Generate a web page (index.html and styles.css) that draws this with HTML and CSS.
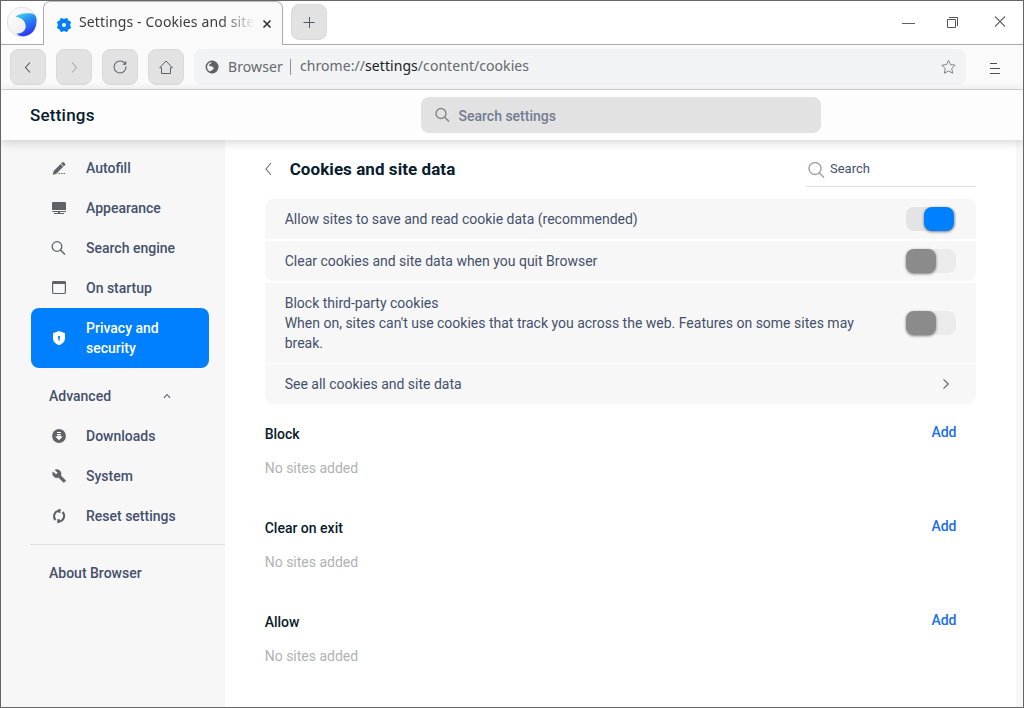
FILE: index.html
```html
<!DOCTYPE html>
<html lang="en">
<head>
<meta charset="utf-8">
<title>Settings - Cookies and site data</title>
<link rel="stylesheet" href="styles.css">
</head>
<body>
<div class="window">
  <header class="tabstrip">
    <div class="brand">
      <svg width="32" height="32" viewBox="0 0 32 32">
        <defs>
          <linearGradient id="wave" x1="0" y1="0" x2=".45" y2="1"><stop offset="0" stop-color="#4be3ee"/><stop offset=".45" stop-color="#278df5"/><stop offset="1" stop-color="#2a36f5"/></linearGradient>
          <linearGradient id="disc" x1="0" y1="0" x2="1" y2="1"><stop offset="0" stop-color="#fff"/><stop offset="1" stop-color="#e8e8ea"/></linearGradient>
        </defs>
        <circle cx="16" cy="16" r="14.8" fill="url(#disc)" stroke="#e2e2e4"/>
        <path d="M9.500 11C12 8 17 7 22 7.300C28 7.300 30.500 9 30.500 14C30.500 22 27 28.500 19 30C15 30.700 12 29.500 10.500 27.500C15 28 19.800 25 19.700 20C19.300 14.500 15 11 9.500 11Z" fill="url(#wave)"/>
      </svg>
    </div>
    <div class="tab">
      <svg class="tab-icon" width="16" height="16" viewBox="0 0 16 16"><path fill="#0080ff" fill-rule="evenodd" d="M5.500 1L8 2L10.500 1L12 2L12.300 3.700L14 4L15 5.500L14 8L15 10.500L14 12L12.300 12.300L12 14L10.500 15L8 14L5.500 15L4 14L3.700 12.300L2 12L1 10.500L2 8L1 5.500L2 4L3.700 3.700L4 2ZM8 5.900A2.100 2.100 0 1 0 8 10.100A2.100 2.100 0 0 0 8 5.900Z"/></svg>
      <span class="tab-title">Settings - Cookies and site</span>
      <svg width="10" height="10" viewBox="0 0 10 10"><path d="M1.500 1.500L8.500 8.500M8.500 1.500L1.500 8.500" stroke="#333" stroke-width="1.700"/></svg>
    </div>
    <div class="strip-rest">
      <div class="btn"><svg width="12" height="12" viewBox="0 0 12 12"><path d="M.5 6.500H11.500M6.500 1V12" stroke="#4c5876"/></svg></div>
      <div class="controls">
        <svg width="13" height="13" viewBox="0 0 13 13"><path d="M0 7.500H13" stroke="#5f5f66"/></svg>
        <svg width="12" height="12" viewBox="0 0 12 12"><path d="M.5 3.500H8.500V11.500H.5ZM2 1.500H10.500V10" fill="none" stroke="#55555c"/></svg>
        <svg width="12" height="12" viewBox="0 0 12 12"><path d="M1 .5L11 10.500M11 .5L1 10.500" stroke="#666" stroke-width="1.100"/></svg>
      </div>
    </div>
  </header>
  <nav class="toolbar">
    <div class="btn"><svg width="16" height="16" viewBox="0 0 16 16"><path d="M10 3.500L5.500 8.500L10 13.500" fill="none" stroke="#555" stroke-width="1.100"/></svg></div>
    <div class="btn"><svg width="16" height="16" viewBox="0 0 16 16"><path d="M6 3.500L10.500 8.500L6 13.500" fill="none" stroke="#aaa" stroke-width="1.100"/></svg></div>
    <div class="btn"><svg width="16" height="16" viewBox="0 0 16 16"><path d="M14 7.500A6 6 0 1 1 11.700 3.300L13.600 5M13.700 2.200V5.200H10.700" fill="none" stroke="#5f6368" stroke-width="1.100"/></svg></div>
    <div class="btn"><svg width="16" height="16" viewBox="0 0 16 16"><path d="M1.700 8.700L8 2L14.300 8.700H12.500V14.500H3.500V8.700Z" fill="none" stroke="#5f6368"/></svg></div>
    <div class="address">
      <svg width="14" height="14" viewBox="0 0 14 14"><circle cx="7" cy="7" r="5.700" fill="none" stroke="#5f6368" stroke-width="1.500"/><path d="M7 .7A6.300 6.300 0 0 1 7 13.300L5 12.700C5 11.500 5.500 11 6.500 10.500C8.500 9.800 9 8.500 8.300 7.300C7.500 6 6 7 4.300 6C3.700 4.300 5 4 6 3.500Z" fill="#5f6368"/></svg>
      <span class="origin">Browser</span>
      <span class="divider"></span>
      <span class="url">chrome://<b>settings</b>/content/cookies</span>
      <svg class="star" width="16" height="16" viewBox="0 0 16 16"><path d="M8.500 1.300L10.500 5.600L15.100 6.200L11.800 9.500L12.600 14.200L8.500 12L4.400 14.200L5.200 9.500L1.900 6.200L6.500 5.600Z" fill="none" stroke="#7f8387"/></svg>
    </div>
    <svg class="menu" width="10" height="12" viewBox="0 0 10 12"><path d="M0 .5H7M0 5.500H10M0 10.500H10" stroke="#505050"/></svg>
  </nav>
  <div class="header">
    <h1>Settings</h1>
    <div class="search"><svg width="16" height="16" viewBox="0 0 16 16"><circle cx="7" cy="6.500" r="5" fill="none" stroke="#868686" stroke-width="1.400"/><path d="M10.500 10L15 14.500" stroke="#868686" stroke-width="1.500"/></svg><span>Search settings</span></div>
  </div>
  <div class="body">
    <aside class="sidebar">
      <div class="item"><svg width="16" height="16" viewBox="0 0 16 16"><path d="M2 14.500L2.800 11L9.500 4.300L12 6.800L5.200 13.700ZM10.200 3.600L11.300 2.500Q12 1.800 12.700 2.500L14 3.800Q14.500 4.500 13.900 5.100L12.800 6.200Z" fill="#5f6368" stroke="#5f6368" stroke-width=".4"/><path d="M7.500 13.500H14.500" stroke="#5f6368" stroke-dasharray="1.500 1"/></svg><span>Autofill</span></div>
      <div class="item"><svg width="16" height="16" viewBox="0 0 16 16"><path d="M1 3Q1 2 2 2H14Q15 2 15 3V10H1ZM1 11H15V11.500Q15 12 14 12H9V13H13V14H3V13H7V12H2Q1 12 1 11Z" fill="#5f6368"/></svg><span>Appearance</span></div>
      <div class="item"><svg width="16" height="16" viewBox="0 0 16 16"><circle cx="6" cy="6.500" r="4.800" fill="none" stroke="#5f6368" stroke-width="1.300"/><path d="M9.500 10L14 14.500" stroke="#5f6368" stroke-width="1.500"/></svg><span>Search engine</span></div>
      <div class="item"><svg width="16" height="16" viewBox="0 0 16 16"><rect x="1.600" y="1.600" width="12.800" height="11.900" rx="1.300" fill="none" stroke="#5f6368" stroke-width="1.200"/><path d="M1 4V2.500Q1 1 2.500 1H13.500Q15 1 15 2.500V4Z" fill="#5f6368"/></svg><span>On startup</span></div>
      <div class="item active"><svg width="16" height="16" viewBox="0 0 16 16"><path d="M8 1L14 3.300V8C14 11.500 11.500 13.800 8 15.300C4.500 13.800 2 11.500 2 8V3.300Z" fill="#fff"/><path d="M7.300 10.500V8A1.200 1.200 0 1 1 8.700 8V10.500Z" fill="#0080ff"/></svg><span>Privacy and security</span></div>
      <div class="advanced"><span>Advanced</span><svg width="8" height="6" viewBox="0 0 8 6"><path d="M1 4.800L4 1.500L7 4.800" fill="none" stroke="#5a5f66" stroke-width="1.100"/></svg></div>
      <div class="item"><svg width="16" height="16" viewBox="0 0 16 16"><circle cx="8" cy="8" r="6.900" fill="#5f6368"/><path d="M6 4.500H10M6 6.500H10" stroke="#fff"/><path d="M6.200 7.500H9.800V8.500H11.800L8 12.300L4.200 8.500H6.200Z" fill="#fff"/></svg><span>Downloads</span></div>
      <div class="item"><svg width="16" height="16" viewBox="0 0 16 16"><path d="M14.500 12.300L9.800 7.600C10.400 5.900 10.100 4 8.800 2.800C7.500 1.500 5.600 1.200 4 1.900L6.800 4.700L4.900 6.600L2 3.800C1.200 5.400 1.600 7.300 2.900 8.600C4.100 9.800 6 10.200 7.600 9.500L12.300 14.200C12.600 14.500 13 14.500 13.300 14.200L14.500 13C14.800 12.800 14.800 12.500 14.500 12.300Z" fill="#5f6368" stroke="#5f6368" stroke-width=".4"/></svg><span>System</span></div>
      <div class="item"><svg width="16" height="16" viewBox="0 0 16 16"><path d="M8 2.800A5.500 5.500 0 0 0 4.500 12M11.500 4A5.500 5.500 0 0 1 8 13.400" fill="none" stroke="#5f6368" stroke-width="2"/><path d="M7 1.400L9.800 .8L9.300 5L7 4.500ZM9 11.500L6.300 11L6.200 15.200L9 14.500Z" fill="#5f6368"/></svg><span>Reset settings</span></div>
      <div class="about">About Browser</div>
    </aside>
    <main class="content">
      <div class="page-head">
        <svg width="8" height="14" viewBox="0 0 8 14"><path d="M6 1L1 7L6 13" fill="none" stroke="#67708a" stroke-width="1.100"/></svg>
        <h2>Cookies and site data</h2>
        <div class="filter"><svg width="18" height="18" viewBox="0 0 18 18"><circle cx="8" cy="7.500" r="6" fill="none" stroke="#a2a7b3" stroke-width="1.500"/><path d="M12.200 11.800L17 16.600" stroke="#a2a7b3" stroke-width="1.500"/></svg><span>Search</span></div>
      </div>
      <div class="group">
        <div class="row first"><span>Allow sites to save and read cookie data (recommended)</span><i class="toggle on"></i></div>
        <div class="row second"><span>Clear cookies and site data when you quit Browser</span><i class="toggle"></i></div>
        <div class="row third"><span>Block third-party cookies<br>When on, sites can't use cookies that track you across the web. Features on some sites may break.</span><i class="toggle"></i></div>
        <div class="row last"><span>See all cookies and site data</span><svg width="8" height="12" viewBox="0 0 8 12"><path d="M1.500 1.300L6.300 6L1.500 10.700" fill="none" stroke="#606060" stroke-width="1.100"/></svg></div>
      </div>
      <section><div class="section-head"><h3>Block</h3><a>Add</a></div><p>No sites added</p></section>
      <section><div class="section-head"><h3>Clear on exit</h3><a>Add</a></div><p>No sites added</p></section>
      <section><div class="section-head"><h3>Allow</h3><a>Add</a></div><p>No sites added</p></section>
    </main>
    <div class="scrollbar"></div>
  </div>
</div>
</body>
</html>
```
FILE: styles.css
```css
* { box-sizing: border-box; }
body { margin: 0; }
svg { display: block; flex: none; }
h1, h2, h3, p { margin: 0; }
.window { width: 1024px; height: 708px; border: 1px solid #666; background: #fff; display: flex; flex-direction: column; overflow: hidden; font: 14px/20px Roboto, sans-serif; color: #44506c; }
.tabstrip { height: 44px; flex: none; display: flex; font-family: "Noto Sans", sans-serif; }
.brand { width: 42px; border-bottom: 1px solid #aaa; padding: 5px 0 0 5px; }
.tab { width: 240px; border: 1px solid #aaa; border-top-color: #bbb; border-bottom: 0; border-radius: 7px 7px 0 0; background: #fafafa; display: flex; align-items: center; padding: 0 10px 0 12px; color: #3c3c3c; }
.tab-icon { margin-top: 3px; }
.tab-title { margin: 0 5px 0 7px; padding-bottom: 4px; width: 178px; white-space: nowrap; font-size: 14px; letter-spacing: .12px; -webkit-mask-image: linear-gradient(90deg, #000 80%, transparent 99%); mask-image: linear-gradient(90deg, #000 80%, transparent 99%); }
.strip-rest { flex: 1; border-bottom: 1px solid #aaa; display: flex; justify-content: space-between; padding: 3px 17px 0 8px; }
.btn { width: 36px; height: 36px; flex: none; background: #e2e2e2; border: 1px solid #dadada; border-radius: 8px; display: flex; align-items: center; justify-content: center; }
.controls { display: flex; gap: 32px; height: 36px; align-items: center; }
.controls svg:last-child { margin-left: 3px; }
.toolbar { height: 45px; flex: none; background: #fafafa; border-bottom: 1px solid #dadada; display: flex; gap: 10px; padding: 4px 23px 0 9px; font-family: "Noto Sans", sans-serif; }
.address { width: 772px; height: 36px; background: #f1f3f5; border-radius: 8px; display: flex; align-items: center; padding: 0 10px 0 11px; font-size: 14px; color: #66696d; }
.origin { margin-left: 9px; width: 55px; letter-spacing: .1px; }
.divider { width: 1px; height: 16px; background: #909396; margin: 0 9px 0 7px; }
.url b { font-weight: 400; color: #202124; }
.url { padding-bottom: 2px; letter-spacing: .06px; }
.star { margin-left: auto; }
.menu { margin: 14px 0 0 14px; }
.header { height: 50px; flex: none; background: #fdfdfd; box-shadow: 0 2px 10px rgba(0,0,0,.18); position: relative; z-index: 1; display: flex; align-items: center; padding-left: 29px; }
h1 { font-size: 17px; line-height: 24px; font-weight: 500; letter-spacing: .22px; color: #071c2c; width: 391px; }
.search { width: 400px; height: 36px; border-radius: 8px; background: #e2e2e2; display: flex; align-items: center; gap: 8.500px; padding-left: 13px; font-weight: 500; color: #737b92; }
.search span { padding-top: 2px; }
.body { flex: 1; display: flex; min-height: 0; }
.sidebar { width: 224px; background: #f7f7f7; padding-top: 8px; font-weight: 500; }
.item { height: 40px; margin: 0 16px 0 30px; padding: 0 20px; display: flex; align-items: center; gap: 19px; }
.active { height: 60px; background: #0080ff; color: #fff; border-radius: 8px; }
.advanced { height: 48px; padding: 8px 54px 0 48px; display: flex; align-items: center; justify-content: space-between; }
.about { margin: 8px 0 0 29px; border-top: 1px solid #e1e1e1; padding: 18px 0 0 19px; }
.content { flex: 1; padding: 0 40px 0 39.700px; }
.page-head { height: 59px; display: flex; align-items: center; padding-bottom: 2px; }
h2 { font-size: 17px; line-height: 24px; font-weight: 700; letter-spacing: .06px; color: #071c2c; margin-left: 17px; }
.filter { width: 170px; height: 35px; margin: 1px 0 0 auto; border-bottom: 1px solid #dedfe0; display: flex; align-items: center; gap: 5px; padding-left: 1px; font-size: 13px; }
.filter svg { margin-top: 3px; }
.group { display: grid; grid-template-rows: 40px 40px 80px 40px; row-gap: 2px; height: 205px; }
.row { background: #f7f7f7; display: flex; align-items: center; justify-content: space-between; padding: 0 20px; }
.row span { width: 576px; }
.first { border-radius: 8px 8px 0 0; }
.second { border-radius: 0 0 8px 8px; }
.last { border-radius: 0 0 8px 8px; margin-top: -1px; height: 40px; padding-right: 26px; }
.toggle { width: 50px; height: 24px; border-radius: 8px; background: #ebebeb; display: flex; }
.toggle::before { content: ""; width: 30px; height: 24px; border-radius: 8px; background: #8b8b8b; box-shadow: 0 1px 3px rgba(0,0,0,.5); }
.on { background: #e4e4e4; }
.on::before { background: #0080ff; margin-left: 18px; }
section { height: 94px; padding-top: 18px; }
.section-head { display: flex; justify-content: space-between; padding-right: 19.500px; }
h3 { font-size: 14px; line-height: 24px; font-weight: 500; color: #071c2c; }
a { font-weight: 500; color: #1a6fe8; }
p { margin-top: 12px; line-height: 20px; color: #b2b2b2; }
.scrollbar { width: 7px; background: #f7f7f7; }
```
